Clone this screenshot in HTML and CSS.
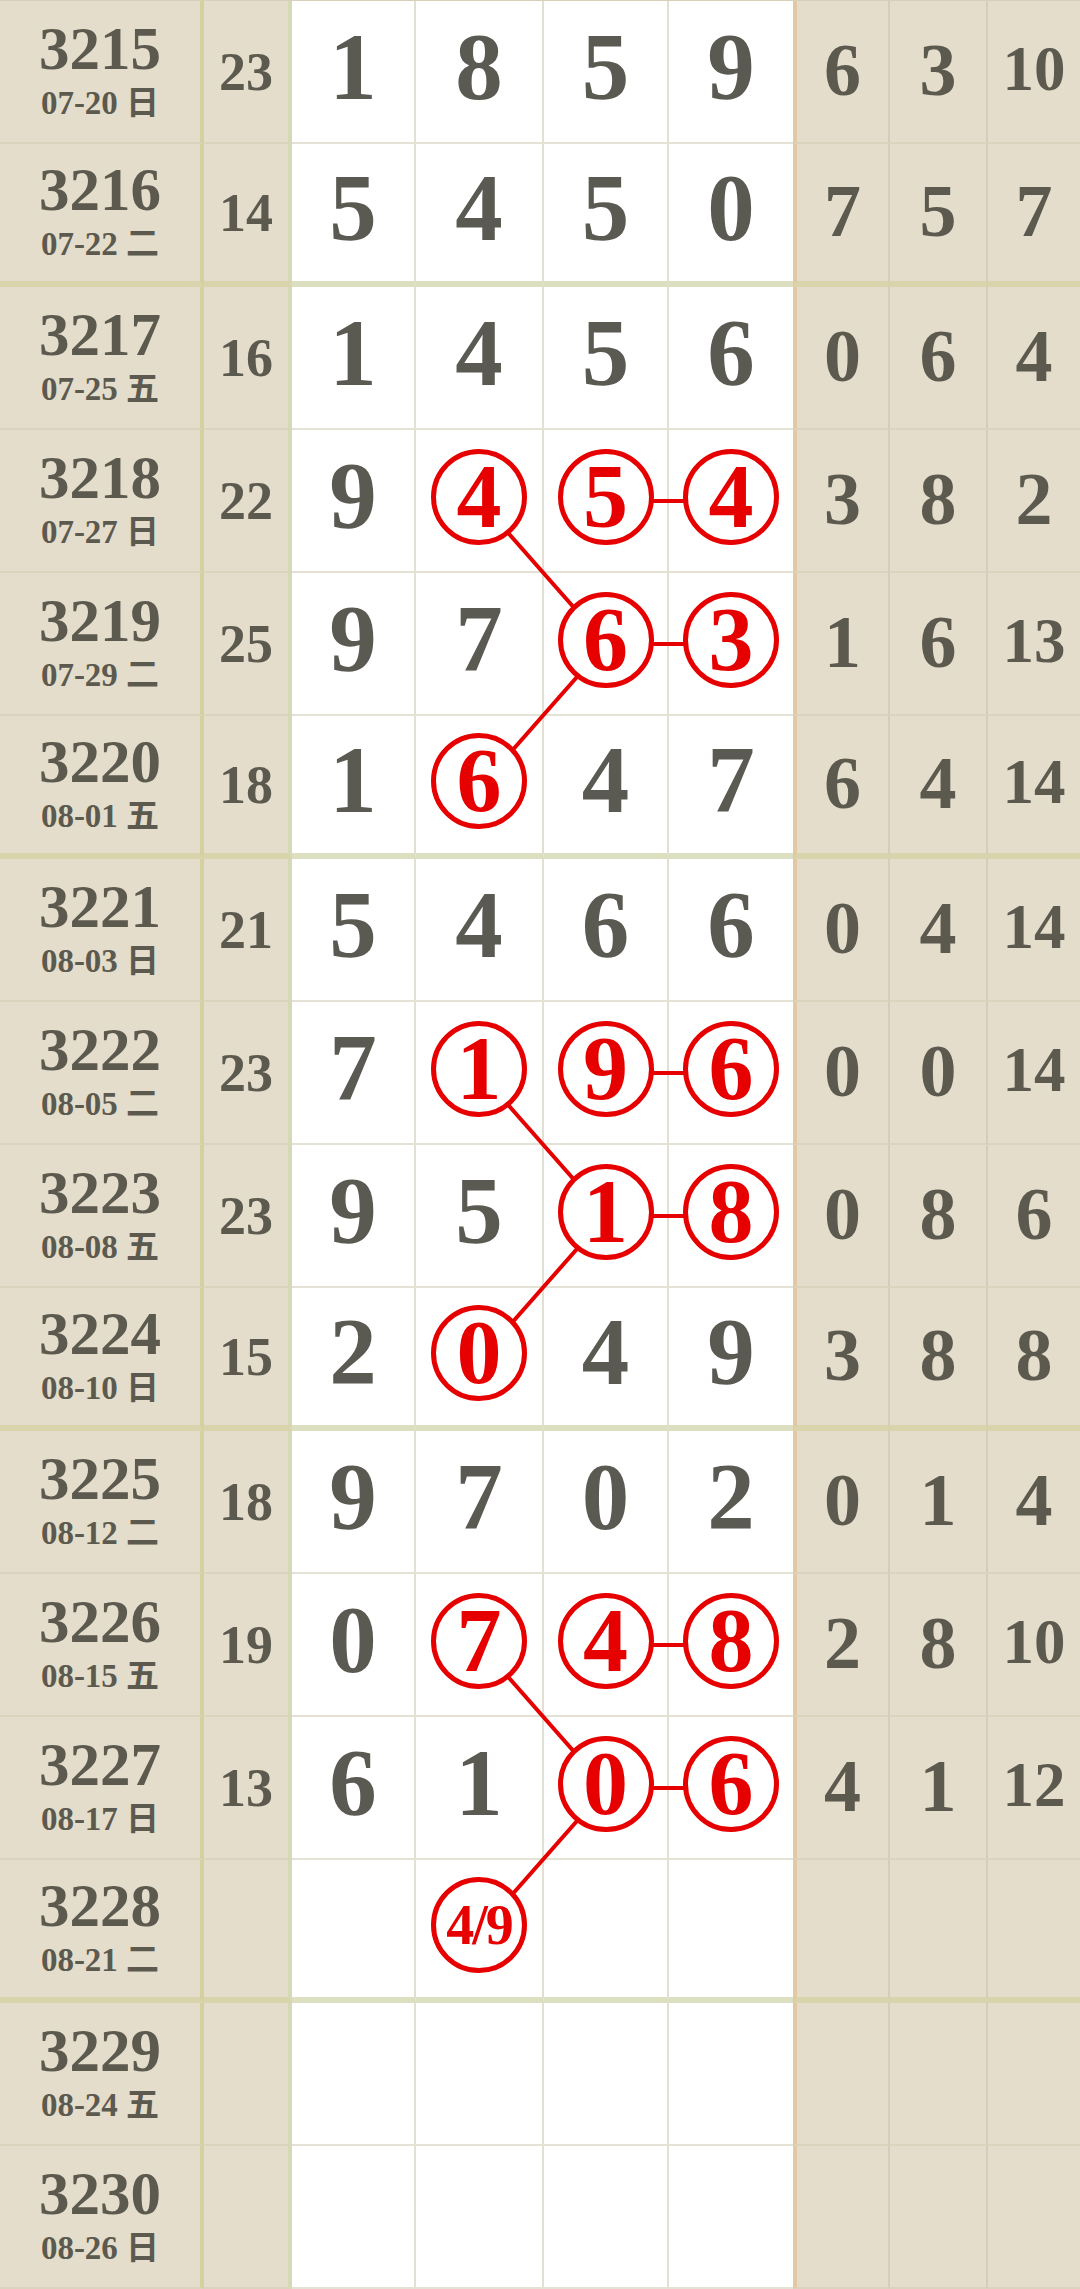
FILE: index.html
```html
<!DOCTYPE html>
<html lang="zh-CN">
<head>
    <meta charset="UTF-8">
    <meta name="viewport" content="width=device-width, initial-scale=1.0">
    <title>走势图</title>
    <link rel="stylesheet" href="styles.css">
</head>
<body>
    <div class="chart">
        <!-- connecting lines, drawn under the rings -->
        <svg class="links" width="1080" height="2289" viewBox="0 0 1080 2289">
            <g stroke="#e60000" stroke-width="4" fill="none">
                <polyline points="480,500 606,643 480,786"/>
                <line x1="606" y1="500" x2="731" y2="500"/>
                <line x1="606" y1="643" x2="731" y2="643"/>
                <polyline points="480,1072 606,1215 480,1358"/>
                <line x1="606" y1="1072" x2="731" y2="1072"/>
                <line x1="606" y1="1215" x2="731" y2="1215"/>
                <polyline points="480,1644 606,1787 480,1930"/>
                <line x1="606" y1="1644" x2="731" y2="1644"/>
                <line x1="606" y1="1787" x2="731" y2="1787"/>
            </g>
        </svg>

        <div class="row">
            <div class="cell period"><span class="issue">3215</span><span class="date">07-20 日</span></div>
            <div class="cell sum">23</div>
            <div class="cell num">1</div><div class="cell num">8</div><div class="cell num">5</div><div class="cell num">9</div>
            <div class="cell stat">6</div><div class="cell stat">3</div><div class="cell stat two">10</div>
        </div>
        <div class="row end">
            <div class="cell period"><span class="issue">3216</span><span class="date">07-22 二</span></div>
            <div class="cell sum">14</div>
            <div class="cell num">5</div><div class="cell num">4</div><div class="cell num">5</div><div class="cell num">0</div>
            <div class="cell stat">7</div><div class="cell stat">5</div><div class="cell stat">7</div>
        </div>

        <div class="row">
            <div class="cell period"><span class="issue">3217</span><span class="date">07-25 五</span></div>
            <div class="cell sum">16</div>
            <div class="cell num">1</div><div class="cell num">4</div><div class="cell num">5</div><div class="cell num">6</div>
            <div class="cell stat">0</div><div class="cell stat">6</div><div class="cell stat">4</div>
        </div>
        <div class="row">
            <div class="cell period"><span class="issue">3218</span><span class="date">07-27 日</span></div>
            <div class="cell sum">22</div>
            <div class="cell num">9</div>
            <div class="cell num"><span class="ring">4</span></div>
            <div class="cell num"><span class="ring">5</span></div>
            <div class="cell num"><span class="ring">4</span></div>
            <div class="cell stat">3</div><div class="cell stat">8</div><div class="cell stat">2</div>
        </div>
        <div class="row">
            <div class="cell period"><span class="issue">3219</span><span class="date">07-29 二</span></div>
            <div class="cell sum">25</div>
            <div class="cell num">9</div><div class="cell num">7</div>
            <div class="cell num"><span class="ring">6</span></div>
            <div class="cell num"><span class="ring">3</span></div>
            <div class="cell stat">1</div><div class="cell stat">6</div><div class="cell stat two">13</div>
        </div>
        <div class="row end">
            <div class="cell period"><span class="issue">3220</span><span class="date">08-01 五</span></div>
            <div class="cell sum">18</div>
            <div class="cell num">1</div>
            <div class="cell num"><span class="ring">6</span></div>
            <div class="cell num">4</div><div class="cell num">7</div>
            <div class="cell stat">6</div><div class="cell stat">4</div><div class="cell stat two">14</div>
        </div>

        <div class="row">
            <div class="cell period"><span class="issue">3221</span><span class="date">08-03 日</span></div>
            <div class="cell sum">21</div>
            <div class="cell num">5</div><div class="cell num">4</div><div class="cell num">6</div><div class="cell num">6</div>
            <div class="cell stat">0</div><div class="cell stat">4</div><div class="cell stat two">14</div>
        </div>
        <div class="row">
            <div class="cell period"><span class="issue">3222</span><span class="date">08-05 二</span></div>
            <div class="cell sum">23</div>
            <div class="cell num">7</div>
            <div class="cell num"><span class="ring">1</span></div>
            <div class="cell num"><span class="ring">9</span></div>
            <div class="cell num"><span class="ring">6</span></div>
            <div class="cell stat">0</div><div class="cell stat">0</div><div class="cell stat two">14</div>
        </div>
        <div class="row">
            <div class="cell period"><span class="issue">3223</span><span class="date">08-08 五</span></div>
            <div class="cell sum">23</div>
            <div class="cell num">9</div><div class="cell num">5</div>
            <div class="cell num"><span class="ring">1</span></div>
            <div class="cell num"><span class="ring">8</span></div>
            <div class="cell stat">0</div><div class="cell stat">8</div><div class="cell stat">6</div>
        </div>
        <div class="row end">
            <div class="cell period"><span class="issue">3224</span><span class="date">08-10 日</span></div>
            <div class="cell sum">15</div>
            <div class="cell num">2</div>
            <div class="cell num"><span class="ring">0</span></div>
            <div class="cell num">4</div><div class="cell num">9</div>
            <div class="cell stat">3</div><div class="cell stat">8</div><div class="cell stat">8</div>
        </div>

        <div class="row">
            <div class="cell period"><span class="issue">3225</span><span class="date">08-12 二</span></div>
            <div class="cell sum">18</div>
            <div class="cell num">9</div><div class="cell num">7</div><div class="cell num">0</div><div class="cell num">2</div>
            <div class="cell stat">0</div><div class="cell stat">1</div><div class="cell stat">4</div>
        </div>
        <div class="row">
            <div class="cell period"><span class="issue">3226</span><span class="date">08-15 五</span></div>
            <div class="cell sum">19</div>
            <div class="cell num">0</div>
            <div class="cell num"><span class="ring">7</span></div>
            <div class="cell num"><span class="ring">4</span></div>
            <div class="cell num"><span class="ring">8</span></div>
            <div class="cell stat">2</div><div class="cell stat">8</div><div class="cell stat two">10</div>
        </div>
        <div class="row">
            <div class="cell period"><span class="issue">3227</span><span class="date">08-17 日</span></div>
            <div class="cell sum">13</div>
            <div class="cell num">6</div><div class="cell num">1</div>
            <div class="cell num"><span class="ring">0</span></div>
            <div class="cell num"><span class="ring">6</span></div>
            <div class="cell stat">4</div><div class="cell stat">1</div><div class="cell stat two">12</div>
        </div>
        <div class="row end">
            <div class="cell period"><span class="issue">3228</span><span class="date">08-21 二</span></div>
            <div class="cell sum"></div>
            <div class="cell num"></div>
            <div class="cell num"><span class="ring small">4/9</span></div>
            <div class="cell num"></div><div class="cell num"></div>
            <div class="cell stat"></div><div class="cell stat"></div><div class="cell stat"></div>
        </div>

        <div class="row">
            <div class="cell period"><span class="issue">3229</span><span class="date">08-24 五</span></div>
            <div class="cell sum"></div>
            <div class="cell num"></div><div class="cell num"></div><div class="cell num"></div><div class="cell num"></div>
            <div class="cell stat"></div><div class="cell stat"></div><div class="cell stat"></div>
        </div>
        <div class="row">
            <div class="cell period"><span class="issue">3230</span><span class="date">08-26 日</span></div>
            <div class="cell sum"></div>
            <div class="cell num"></div><div class="cell num"></div><div class="cell num"></div><div class="cell num"></div>
            <div class="cell stat"></div><div class="cell stat"></div><div class="cell stat"></div>
        </div>
    </div>
</body>
</html>
```

FILE: styles.css
```css
* {
    box-sizing: border-box;
}

body {
    margin: 0;
    padding: 0;
    background-color: #e4ddcc;
    font-family: "Liberation Serif", "Noto Sans CJK SC", serif;
    font-weight: bold;
    color: #5c5a4f;
}

.chart {
    position: relative;
    width: 1080px;
    border-top: 1px solid #d9d0bb;
}

.links {
    position: absolute;
    top: 0;
    left: 0;
    z-index: 1;
}

.row {
    display: grid;
    grid-template-columns: 204px 88px 124px 128px 125px 124px 97px 98px 92px;
    height: 143px;
}

.cell {
    display: flex;
    align-items: center;
    justify-content: center;
    border-bottom: 2px solid #dbd3be;
    line-height: 1;
}

.row.end .cell {
    border-bottom: 6px solid #d9d4ab;
}

/* period + date */
.period {
    flex-direction: column;
    gap: 13px;
    background: #e4ddcc;
    border-right: 4px solid #d6d09e;
}

.issue {
    font-size: 61px;
    line-height: 50px;
}

.date {
    font-size: 33px;
    line-height: 32px;
}

.sum {
    font-size: 54px;
    background: #e4ddcc;
    border-right: 4px solid #d5d9b6;
}

/* drawn numbers */
.num {
    font-size: 95px;
    color: #5b5a52;
    background: #fff;
    border-right: 2px solid #e2e0d0;
    padding-bottom: 8px;
}

.row .cell.num {
    border-bottom-color: #e3e2d4;
}

.row.end .cell.num {
    border-bottom-color: #dde0c0;
}

.num:nth-child(6) {
    border-right: none;
}

.ring {
    position: relative;
    z-index: 2;
    display: flex;
    align-items: center;
    justify-content: center;
    width: 96px;
    height: 96px;
    border: 5px solid #e60000;
    border-radius: 50%;
    background: #fff;
    color: #e60000;
    font-size: 90px;
    line-height: 1;
}

.ring.small {
    font-size: 56px;
    letter-spacing: -2px;
}

/* right side stats */
.stat {
    font-size: 74px;
    background: #e4ddcc;
    border-right: 2px solid #d6cdb6;
    padding-bottom: 4px;
}

.stat:nth-child(7) {
    border-left: 4px solid #e3c9a3;
}

.stat:last-child {
    border-right: none;
}

.stat.two {
    font-size: 63px;
}
```
